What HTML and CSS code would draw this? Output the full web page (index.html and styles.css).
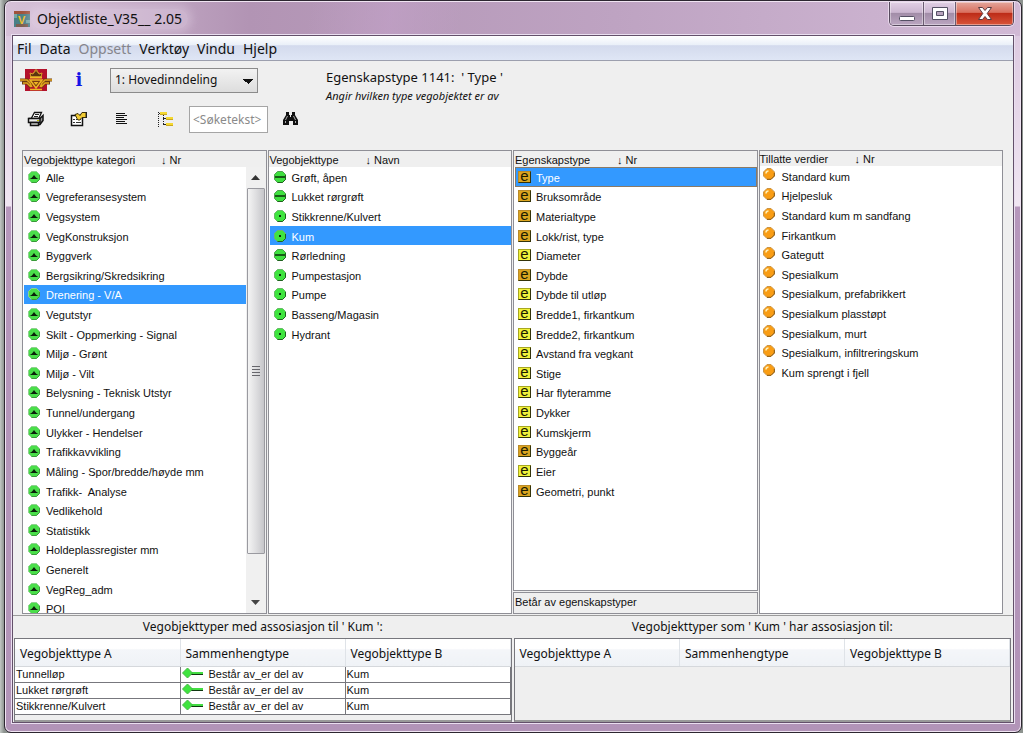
FILE: index.html
```html
<!DOCTYPE html>
<html lang="no">
<head>
<meta charset="utf-8">
<title>Objektliste_V35__ 2.05</title>
<link rel="stylesheet" href="styles.css">
</head>
<body>
<svg class="defs" aria-hidden="true">
  <defs>
    <symbol id="cat" viewBox="0 0 12 12">
      <path d="M3.500 0.500h5l3 3v5l-3 3h-5l-3-3v-5z" fill="#4ade4a" stroke="#8fd08f"/>
      <path d="M11.500 4v4.500l-3 3H3.500" fill="none" stroke="#3a9a3a"/>
      <path d="M1.500 8c1.500-.3 3-1.600 4.500-4C7.500 6.400 9 7.700 10.500 8z" fill="#0a200a"/>
    </symbol>
    <symbol id="line" viewBox="0 0 12 12">
      <path d="M3.500 0.500h5l3 3v5l-3 3h-5l-3-3v-5z" fill="#3fe03f" stroke="#4da04d"/>
      <path d="M11.500 4v4.500l-3 3H3.500" fill="none" stroke="#1f5f1f"/>
      <path d="M1 6h10" stroke="#083008" stroke-width="1.500"/>
    </symbol>
    <symbol id="dot" viewBox="0 0 12 12">
      <path d="M3.500 0.500h5l3 3v5l-3 3h-5l-3-3v-5z" fill="#3fe43f" stroke="#6ab86a"/>
      <path d="M11.500 4v4.500l-3 3H3.500" fill="none" stroke="#1f5f1f"/>
      <path d="M5 5h2v2H5z" fill="#083008"/>
    </symbol>
    <symbol id="ball" viewBox="0 0 12 12">
      <path d="M4 0.500h4l3.500 3.500v4L8 11.500H4L0.500 8V4z" fill="#f99d14" stroke="#c9964a"/>
      <path d="M11.300 5v3L8 11.300H4" stroke="#8a5a14" fill="none"/>
      <path d="M3 5.500C3 4 4 3 5.500 3" stroke="#fff0b8" stroke-width="1.500" fill="none"/>
    </symbol>
    <symbol id="rel" viewBox="0 0 22 12">
      <path d="M9 6h12" stroke="#44dd44" stroke-width="2"/><path d="M9 7.500h12" stroke="#103810"/>
      <path d="M5.500 1l5 5-5 5-5-5z" fill="#3fe43f" stroke="#45b845"/>
    </symbol>
  </defs>
</svg>
<div class="window">
  <header class="titlebar">
    <svg class="app-icon" width="16" height="16" viewBox="0 0 16 16" aria-hidden="true">
      <rect width="16" height="16" fill="#4a7f86"/><path d="M0 0h16v3H0z" fill="#a0523a"/><path d="M0 3h3v4H0zM12 9h4v3h-4z" fill="#76a8a4"/><path d="M2 13h12v3H2z" fill="#7c5e50"/>
      <text x="4" y="13" class="app-letter">V</text>
    </svg>
    <h1 class="title">Objektliste_V35__ 2.05</h1>
    <div class="controls">
      <button class="ctl min" aria-label="Minimer"><svg width="18" height="20" viewBox="0 0 18 20"><rect x="1.500" y="14.500" width="15" height="4" rx="1" fill="#fff" stroke="#555064"/></svg></button>
      <button class="ctl max" aria-label="Maksimer"><svg width="18" height="20" viewBox="0 0 18 20"><path d="M1.500 5.500h15v12h-15z" fill="#fff" stroke="#555064"/><path d="M5.500 9.500h7v4h-7z" fill="#b8a4bd" stroke="#555064"/></svg></button>
      <button class="ctl close" aria-label="Lukk"><svg width="18" height="20" viewBox="0 0 18 20"><path d="M2.500 5.500h4L9 8.500l2.500-3h4l-4.300 6 4.300 6h-4L9 14.500l-2.500 3h-4l4.300-6z" fill="#fff" stroke="#5b3a40"/></svg></button>
    </div>
  </header>
  <main class="client">
    <nav class="menu">
      <button>Fil</button><button>Data</button><button disabled>Oppsett</button><button>Verktøy</button><button>Vindu</button><button>Hjelp</button>
    </nav>
    <section class="toolbar">
      <div class="tools">
        <div class="tool-row">
          <button class="tool logo" aria-label="Vegvesen"><svg width="32" height="24" viewBox="0 0 32 24"><rect x="5" y="1" width="22" height="22" fill="#b3122c"/>
            <path d="M11 9l-1-4 3 1 1-2h1V2h2v2h1l1 2 3-1-1 4z" fill="#5b3510" stroke="#d9a02a"/>
            <path d="M10 9.500h12" stroke="#f0bc28" stroke-width="2"/>
            <path d="M0 12h7l3 3 2 4M32 12h-7l-3 3-2 4M2 15h5l4 4M30 15h-5l-4 4" fill="none" stroke="#6a3a10" stroke-width="3"/>
            <path d="M0 12h7l3 3 2 4M32 12h-7l-3 3-2 4M3 15h4l4 4M29 15h-4l-4 4" fill="none" stroke="#e3a61e" stroke-width="1.500"/>
            <path d="M10 12h12l-6 8z" fill="#7a3b12" stroke="#eeb824" stroke-width="1.500"/><path d="M13.500 14h5L16 17z" fill="#eeb824"/><path d="M10 21.500h12" stroke="#eeb824" stroke-width="1.500"/></svg></button>
          <button class="tool info" aria-label="Informasjon">i</button>
          <select class="combo" aria-label="Inndeling"><option>1: Hovedinndeling</option></select>
        </div>
        <div class="tool-row">
          <button class="tool" aria-label="Skriv ut"><svg width="18" height="16" viewBox="0 0 18 16"><path d="M4.500 7L7.500 1.500h7L12 7" fill="#fff" stroke="#111" stroke-width="1.300"/><path d="M8 3.500h4M7 5.500h4" stroke="#222"/><path d="M1.500 7.500h11.500l3-3v5l-3 4h-1" fill="#999" stroke="#111" stroke-width="1.500"/><path d="M1.500 7.500h11.500v4H1.500z" fill="#eee" stroke="#111" stroke-width="1.500"/><path d="M3.500 11.500h8v3h-8z" fill="#ccc" stroke="#111" stroke-width="1.500"/><path d="M10 9.500h2" stroke="#bb0"/></svg></button>
          <button class="tool" aria-label="Egenskaper"><svg width="18" height="16" viewBox="0 0 18 16"><path d="M1.500 4.500h11v10h-11z" fill="#fff" stroke="#111" stroke-width="1.500"/><path d="M3 8.500h2m1 0h5M3 11.500h2m1 0h5" stroke="#333"/><path d="M5 3.500l3-1 2 2 2-3h4v5h-4l-3 3-2-2z" fill="#f1cb35" stroke="#3a2f08"/><path d="M16 1h1v6h-1z" fill="#222"/></svg></button>
          <button class="tool" aria-label="Liste"><svg width="18" height="16" viewBox="0 0 18 16"><path d="M3 2.500h9M3 4.500h11M3 6.500h8M3 8.500h11M3 10.500h9M3 12.500h11" stroke="#111"/></svg></button>
          <button class="tool" aria-label="Tre"><svg width="18" height="16" viewBox="0 0 18 16"><path d="M2.500 1v15M7.500 4v10" stroke="#222" stroke-dasharray="1 1"/><path d="M3 2.500h2M7 7.500h4M7 13.500h4" stroke="#222"/><path d="M4 1h7v3H4zM10 6h7v3h-7zM10 12h7v3h-7z" fill="#f5d82e"/><path d="M4 3.500h7M10 8.500h7M10 14.500h7" stroke="#c9a820"/></svg></button>
          <input class="search" type="text" placeholder="&lt;Søketekst&gt;" aria-label="Søketekst">
          <button class="tool" aria-label="Søk"><svg width="18" height="16" viewBox="0 0 18 16"><path d="M4 1h3v3h1v2h1V4h1V1h3v3l3 5v5h-5v-4H7v4H1V9l3-5z" fill="#111"/><path d="M5.500 5l-2 4M11.500 5l2 4M3.500 10v2M13.500 10v2" stroke="#aaa"/></svg></button>
        </div>
      </div>
      <div class="info-text"><h2>Egenskapstype 1141:&nbsp; ' Type '</h2><p>Angir hvilken type vegobjektet er av</p></div>
    </section>
    <section class="lists">
      <div class="panel">
        <div class="panel-head"><span class="w-cat">Vegobjekttype kategori</span><span>↓ Nr</span></div>
        <div class="panel-body">
          <ul class="list">
            <li><button><svg><use href="#cat"/></svg>Alle</button></li>
            <li><button><svg><use href="#cat"/></svg>Vegreferansesystem</button></li>
            <li><button><svg><use href="#cat"/></svg>Vegsystem</button></li>
            <li><button><svg><use href="#cat"/></svg>VegKonstruksjon</button></li>
            <li><button><svg><use href="#cat"/></svg>Byggverk</button></li>
            <li><button><svg><use href="#cat"/></svg>Bergsikring/Skredsikring</button></li>
            <li><button class="sel"><svg><use href="#cat"/></svg>Drenering - V/A</button></li>
            <li><button><svg><use href="#cat"/></svg>Vegutstyr</button></li>
            <li><button><svg><use href="#cat"/></svg>Skilt - Oppmerking - Signal</button></li>
            <li><button><svg><use href="#cat"/></svg>Miljø - Grønt</button></li>
            <li><button><svg><use href="#cat"/></svg>Miljø - Vilt</button></li>
            <li><button><svg><use href="#cat"/></svg>Belysning - Teknisk Utstyr</button></li>
            <li><button><svg><use href="#cat"/></svg>Tunnel/undergang</button></li>
            <li><button><svg><use href="#cat"/></svg>Ulykker - Hendelser</button></li>
            <li><button><svg><use href="#cat"/></svg>Trafikkavvikling</button></li>
            <li><button><svg><use href="#cat"/></svg>Måling - Spor/bredde/høyde mm</button></li>
            <li><button><svg><use href="#cat"/></svg>Trafikk-&nbsp; Analyse</button></li>
            <li><button><svg><use href="#cat"/></svg>Vedlikehold</button></li>
            <li><button><svg><use href="#cat"/></svg>Statistikk</button></li>
            <li><button><svg><use href="#cat"/></svg>Holdeplassregister mm</button></li>
            <li><button><svg><use href="#cat"/></svg>Generelt</button></li>
            <li><button><svg><use href="#cat"/></svg>VegReg_adm</button></li>
            <li><button><svg><use href="#cat"/></svg>POI</button></li>
          </ul>
          <div class="scrollbar" aria-hidden="true">
            <svg class="arrow" width="9" height="5" viewBox="0 0 9 5"><path d="M0 5l4.500-5L9 5z" fill="#333"/></svg>
            <div class="thumb"><i></i><i></i><i></i><i></i></div>
            <div class="track"><svg class="arrow" width="9" height="5" viewBox="0 0 9 5"><path d="M0 0h9L4.500 5z" fill="#444"/></svg></div>
          </div>
        </div>
      </div>
      <div class="panel">
        <div class="panel-head"><span class="w-type">Vegobjekttype</span><span>↓ Navn</span></div>
        <div class="panel-body">
          <ul class="list">
            <li><button><svg><use href="#line"/></svg>Grøft, åpen</button></li>
            <li><button><svg><use href="#line"/></svg>Lukket rørgrøft</button></li>
            <li><button><svg><use href="#dot"/></svg>Stikkrenne/Kulvert</button></li>
            <li><button class="sel"><svg><use href="#dot"/></svg>Kum</button></li>
            <li><button><svg><use href="#line"/></svg>Rørledning</button></li>
            <li><button><svg><use href="#dot"/></svg>Pumpestasjon</button></li>
            <li><button><svg><use href="#dot"/></svg>Pumpe</button></li>
            <li><button><svg><use href="#dot"/></svg>Basseng/Magasin</button></li>
            <li><button><svg><use href="#dot"/></svg>Hydrant</button></li>
          </ul>
        </div>
      </div>
      <div class="stack">
        <div class="panel grow">
          <div class="panel-head"><span class="w-prop">Egenskapstype</span><span>↓ Nr</span></div>
          <div class="panel-body">
            <ul class="list">
              <li><button class="sel focus"><span class="e gold">e</span>Type</button></li>
              <li><button><span class="e gold">e</span>Bruksområde</button></li>
              <li><button><span class="e gold">e</span>Materialtype</button></li>
              <li><button><span class="e gold">e</span>Lokk/rist, type</button></li>
              <li><button><span class="e">e</span>Diameter</button></li>
              <li><button><span class="e gold">e</span>Dybde</button></li>
              <li><button><span class="e">e</span>Dybde til utløp</button></li>
              <li><button><span class="e">e</span>Bredde1, firkantkum</button></li>
              <li><button><span class="e">e</span>Bredde2, firkantkum</button></li>
              <li><button><span class="e">e</span>Avstand fra vegkant</button></li>
              <li><button><span class="e">e</span>Stige</button></li>
              <li><button><span class="e">e</span>Har flyteramme</button></li>
              <li><button><span class="e">e</span>Dykker</button></li>
              <li><button><span class="e">e</span>Kumskjerm</button></li>
              <li><button><span class="e gold">e</span>Byggeår</button></li>
              <li><button><span class="e">e</span>Eier</button></li>
              <li><button><span class="e gold">e</span>Geometri, punkt</button></li>
            </ul>
          </div>
        </div>
        <div class="panel"><div class="panel-head foot">Betår av egenskapstyper</div></div>
      </div>
      <div class="panel values">
        <div class="panel-head"><span class="w-val">Tillatte verdier</span><span>↓ Nr</span></div>
        <div class="panel-body">
          <ul class="list">
            <li><button><svg><use href="#ball"/></svg>Standard kum</button></li>
            <li><button><svg><use href="#ball"/></svg>Hjelpesluk</button></li>
            <li><button><svg><use href="#ball"/></svg>Standard kum m sandfang</button></li>
            <li><button><svg><use href="#ball"/></svg>Firkantkum</button></li>
            <li><button><svg><use href="#ball"/></svg>Gategutt</button></li>
            <li><button><svg><use href="#ball"/></svg>Spesialkum</button></li>
            <li><button><svg><use href="#ball"/></svg>Spesialkum, prefabrikkert</button></li>
            <li><button><svg><use href="#ball"/></svg>Spesialkum plasstøpt</button></li>
            <li><button><svg><use href="#ball"/></svg>Spesialkum, murt</button></li>
            <li><button><svg><use href="#ball"/></svg>Spesialkum, infiltreringskum</button></li>
            <li><button><svg><use href="#ball"/></svg>Kum sprengt i fjell</button></li>
          </ul>
        </div>
      </div>
    </section>
    <section class="relations">
      <div class="relation">
        <h3>Vegobjekttyper med assosiasjon til ' Kum ':</h3>
        <div class="table-box">
          <table>
            <thead><tr><th>Vegobjekttype A</th><th>Sammenhengtype</th><th>Vegobjekttype B</th></tr></thead>
            <tbody>
              <tr><td>Tunnelløp</td><td><svg><use href="#rel"/></svg>Består av_er del av</td><td>Kum</td></tr>
              <tr><td>Lukket rørgrøft</td><td><svg><use href="#rel"/></svg>Består av_er del av</td><td>Kum</td></tr>
              <tr><td>Stikkrenne/Kulvert</td><td><svg><use href="#rel"/></svg>Består av_er del av</td><td>Kum</td></tr>
            </tbody>
          </table>
        </div>
      </div>
      <div class="relation">
        <h3>Vegobjekttyper som ' Kum ' har assosiasjon til:</h3>
        <div class="table-box">
          <table>
            <thead><tr><th>Vegobjekttype A</th><th>Sammenhengtype</th><th>Vegobjekttype B</th></tr></thead>
          </table>
        </div>
      </div>
    </section>
  </main>
</div>
</body>
</html>
```
FILE: styles.css
```css
* { box-sizing: border-box; }
body { margin: 0; background: linear-gradient(90deg, #c3c8c5, #8d938f 4px, #8d938f); font: 12px/16px "Noto Sans", sans-serif; color: #111; }
button, input, select { font: inherit; color: inherit; }
button { margin: 0; padding: 0; border: 0; background: none; }
h1, h2, h3, p, ul { margin: 0; padding: 0; font-weight: normal; }
ul { list-style: none; }
.defs { position: absolute; width: 0; height: 0; }

.window {
  display: flex; flex-direction: column; height: 100vh;
  margin: 0 1px 0 4px; padding: 1px 7px 9px;
  border: 1px solid #2c2630; border-radius: 7px;
  background:
    linear-gradient(100deg, transparent 30%, #c4a2ca88 38%, transparent 45%) top / 100% 35px no-repeat,
    linear-gradient(90deg, #d6c1d8, #b294b4 24%, #bea3c2 60%, #d1b9d5) top / 100% 35px no-repeat,
    linear-gradient(#d9c4dd, #f0e6f2 205px, #b697bc 206px, #b294b8);
  box-shadow: inset 0 0 0 1px #f0e4f2;
}

.titlebar { flex: none; display: flex; align-items: flex-start; height: 33px; padding-left: 2px; }
.app-icon { margin: 9px 1px 0 0; }
.app-letter { font: bold 11px "Liberation Sans", sans-serif; fill: #f2c028; }
.title { margin-top: 7px; padding: 0 6px; font-size: 14px; line-height: 20px; border-radius: 10px; background: #ecdff055; box-shadow: 0 0 8px 4px #ecdff055; }
.controls { display: flex; height: 24px; margin-left: auto; border: 1px solid #574b5e; border-top: 0; border-radius: 0 0 5px 5px; overflow: hidden; box-shadow: 0 0 0 1px #e8d8eb; }
.ctl { display: flex; justify-content: center; width: 34px; border-right: 1px solid #6c5c72; background: linear-gradient(#e2d0e5, #cbb6d0 45%, #a28da8 50%, #bba6c1); box-shadow: inset 0 0 0 1px #ffffff66; }
.max { width: 32px; }
.close { width: 57px; border: 0; background: linear-gradient(#e4a69c, #d9705f 45%, #bd2c18 50%, #d9553a); }

.client { flex: 1; min-height: 0; display: flex; flex-direction: column; border: 1px solid #63506a; background: #efefef; box-shadow: 0 0 0 1px #eadff0; }
.menu { flex: none; display: flex; gap: 8px; height: 25px; padding: 2px 4px 0; align-items: center; border-bottom: 1px solid #9c9fae; background: linear-gradient(#fff, #e9eff8 38%, #d3daed 40%, #dfe6f5); font-size: 14px; line-height: 20px; }
.menu button:disabled { color: #85858c; }

.toolbar { flex: none; display: flex; height: 89px; }
.tools { width: 313px; padding: 4px 0 0 6px; }
.tool-row { display: flex; align-items: center; height: 30px; }
.tool-row + .tool-row { margin-top: 9px; }
.tool { display: flex; justify-content: center; align-items: center; width: 34px; margin-right: 9px; }
.info { font: bold 18px/20px "DejaVu Serif", serif; color: #1414e6; }
.combo { width: 148px; height: 25px; margin-left: 5px; padding: 0 4px; appearance: none; border: 1px solid #8b8b8b; border-radius: 0; color: #111; background: conic-gradient(from -45deg at 50% 100%, #111 0 90deg, transparent 0) right 4px top 10px / 10px 5px no-repeat, linear-gradient(#f2f2f2, #ddd); }
.search { width: 79px; height: 27px; margin: 0 6px 0 -2px; padding: 0 3px; border: 1px solid #a5a5a5; background: #fff; }
.search::placeholder { color: #8a8a8a; opacity: 1; }
.info-text { padding-top: 7px; }
.info-text h2 { font-size: 13px; line-height: 18px; }
.info-text p { font-size: 11px; line-height: 20px; font-style: italic; }

.lists { flex: 1; min-height: 0; display: grid; grid-template-columns: repeat(4, minmax(0, 1fr)); gap: 1px; padding: 0 10px 0 9px; font: 11px/16px "Liberation Sans", sans-serif; }
.panel, .stack { display: flex; flex-direction: column; min-height: 0; }
.stack { gap: 1px; }
.grow { flex: 1; }
.panel { border: 1px solid #8f8f96; background: #fff; }
.panel-head { flex: none; display: flex; height: 16px; padding: 1px 1px 0; background: #efefef; white-space: nowrap; }
.foot { height: 20px; padding-top: 1px; }
.w-cat { width: 137px; }
.w-type { width: 96px; }
.w-prop { width: 102px; }
.w-val { width: 95px; }
.panel-body { flex: 1; min-height: 0; display: flex; overflow: hidden; }
.list { flex: 1; display: grid; grid-template-rows: repeat(23, minmax(0, 1fr)); height: 451px; padding-left: 1px; }
.list li { display: flex; }
.list button { flex: 1; display: flex; align-items: center; padding: 2px 0 0 4px; text-align: left; white-space: nowrap; }
.list svg { width: 12px; height: 12px; margin: 0 6px 2px 0; }
.list .sel { background: #3399ff; color: #fff; }
.list .focus { outline: 1px solid #8a7a66; outline-offset: -1px; }
.e { width: 13px; height: 12px; margin: 0 5px 2px -1px; border: 1px solid #a8a820; border-right-color: #33330a; border-bottom-color: #33330a; background: #f2f23c; color: #1a1a00; font-size: 15px; line-height: 8px; text-align: center; }
.e.gold { background: #dba520; border-top-color: #b98a28; border-left-color: #b98a28; }
.values .panel-head { height: 15px; padding: 0; }
.values svg { margin: 0 7px 5px 0; }
.values .list button { padding-left: 2px; }

.scrollbar { flex: none; display: flex; flex-direction: column; align-items: center; width: 20px; background: #f0f0f0; }
.scrollbar .arrow { flex: none; margin: 8px 0; }
.thumb { flex: 366; width: 18px; display: flex; flex-direction: column; justify-content: center; align-items: center; gap: 2px; border: 1px solid #9a9aa0; border-radius: 1px; background: linear-gradient(90deg, #f4f4f4, #dedee0 50%, #c6c6ca); }
.thumb i { width: 8px; height: 1px; background: #66666c; }
.track { flex: 59; display: flex; align-items: flex-end; }

.relations { flex: none; display: grid; grid-template-columns: repeat(2, minmax(0, 1fr)); gap: 2px; margin-top: 1px; padding: 0 2px 0 1px; border-top: 1px solid #9b9b9b; }
.relation h3 { font-size: 12px; line-height: 22px; text-align: center; }
.table-box { height: 84px; border: 1px solid #77777d; border-bottom: 2px solid #999; }
table { width: 100%; table-layout: fixed; border-collapse: collapse; }
th { height: 27px; padding: 4px 5px 0; text-align: left; font-weight: normal; border-right: 1px solid #dfe3e8; border-bottom: 1px solid #d5d8dc; background: linear-gradient(#fff 35%, #f4f6f9 40%, #eff2f6); }
td { height: 16px; padding: 0 1px; font: 11px/15px "Liberation Sans", sans-serif; background: #fff; border-right: 1px solid #77777d; border-bottom: 1px solid #77777d; white-space: nowrap; }
td svg { width: 22px; height: 12px; margin-right: 5px; vertical-align: top; }
```
